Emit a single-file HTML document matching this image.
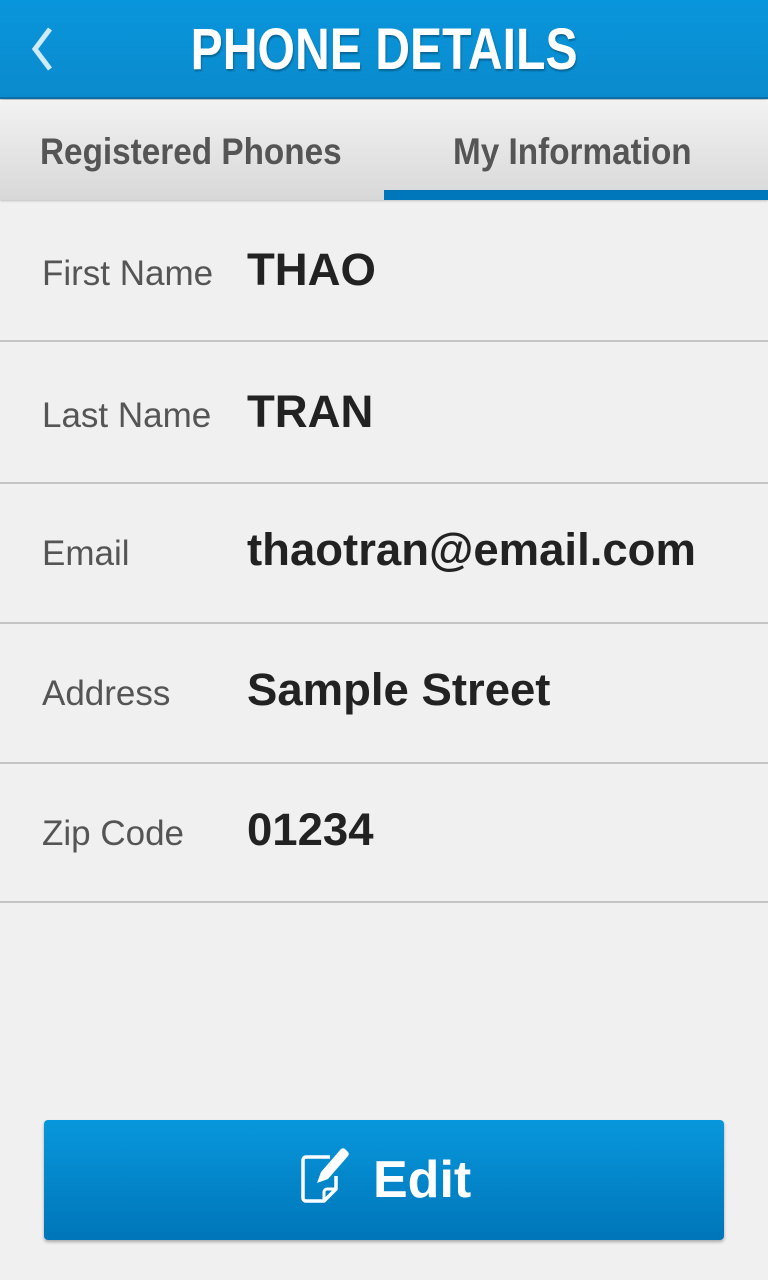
<!DOCTYPE html>
<html><head><meta charset="utf-8"><style>
*{margin:0;padding:0;box-sizing:border-box}
body{width:768px;height:1280px;background:#f0f0f0;font-family:"Liberation Sans",sans-serif;position:relative;overflow:hidden}
.hdr{position:absolute;left:0;top:0;width:768px;height:99px;background:linear-gradient(#0995dc,#0a8bcd);border-bottom:2px solid #0a6fa5;box-shadow:0 2px 3px rgba(0,0,0,.25)}
.title{position:absolute;left:0;width:768px;top:19px;text-align:center;color:#fff;font-weight:bold;font-size:58px;line-height:62px}
.title span{display:inline-block;transform:scaleX(.83);text-shadow:1px 2px 2px rgba(0,0,0,.3)}
.tabs{position:absolute;top:100px;left:0;width:768px;height:100px;background:linear-gradient(#f2f2f2,#d8d8d8);box-shadow:0 1px 2px rgba(0,0,0,.2)}
.tab{position:absolute;top:29px;font-weight:bold;font-size:37px;color:#555;line-height:46px}
.tab span{display:inline-block;transform:scaleX(.9);transform-origin:left}
.ul{position:absolute;left:384px;top:190px;width:384px;height:10px;background:#0077bb}
.row{position:absolute;left:0;width:768px;border-bottom:2px solid #c4c4c4}
.lab{position:absolute;left:42px;font-size:35px;color:#555}
.val{position:absolute;left:247px;font-size:45.5px;font-weight:bold;color:#222}
.btn{position:absolute;left:44px;top:1120px;width:680px;height:120px;border-radius:4px;background:linear-gradient(#0897dc,#0075b9);box-shadow:0 2px 3px rgba(0,0,0,.3)}
.btn .t{position:absolute;left:329px;top:29px;color:#fff;font-weight:bold;font-size:52px;line-height:62px}
</style></head><body>
<div class="hdr">
<svg style="position:absolute;left:28px;top:26px" width="30" height="46" viewBox="0 0 30 46"><polyline points="22,3 7,23 22,43" fill="none" stroke="#cfeaf8" stroke-width="5"/></svg>
<div class="title"><span>PHONE DETAILS</span></div>
</div>
<div class="tabs">
<div class="tab" style="left:40px"><span>Registered Phones</span></div>
<div class="tab" style="left:453px"><span>My Information</span></div>
</div>
<div class="ul"></div>
<div class="row" style="top:200px;height:142px"><div class="lab" style="top:54px">First Name</div><div class="val" style="top:44px">THAO</div></div>
<div class="row" style="top:342px;height:142px"><div class="lab" style="top:54px">Last Name</div><div class="val" style="top:44px">TRAN</div></div>
<div class="row" style="top:484px;height:140px"><div class="lab" style="top:50px">Email</div><div class="val" style="top:40px">thaotran@email.com</div></div>
<div class="row" style="top:624px;height:140px"><div class="lab" style="top:50px">Address</div><div class="val" style="top:40px">Sample Street</div></div>
<div class="row" style="top:764px;height:139px"><div class="lab" style="top:50px">Zip Code</div><div class="val" style="top:40px">01234</div></div>
<div class="btn">
<svg style="position:absolute;left:256px;top:26px" width="52" height="62" viewBox="0 0 52 62">
<path d="M30 11 H6 a3 3 0 0 0 -3 3 V52 a3 3 0 0 0 3 3 H24 L36 43 V30" fill="none" stroke="#fff" stroke-width="3.5" stroke-linejoin="round"/>
<path d="M24 55 V46 a3 3 0 0 1 3 -3 H36" fill="none" stroke="#fff" stroke-width="3"/>
<path d="M41 3 a3 3 0 0 1 4 0 L48 6 a3 3 0 0 1 0 4 L28 33 L17 37 L21 26 Z" fill="#fff"/>
</svg>
<div class="t">Edit</div>
</div>
</body></html>
